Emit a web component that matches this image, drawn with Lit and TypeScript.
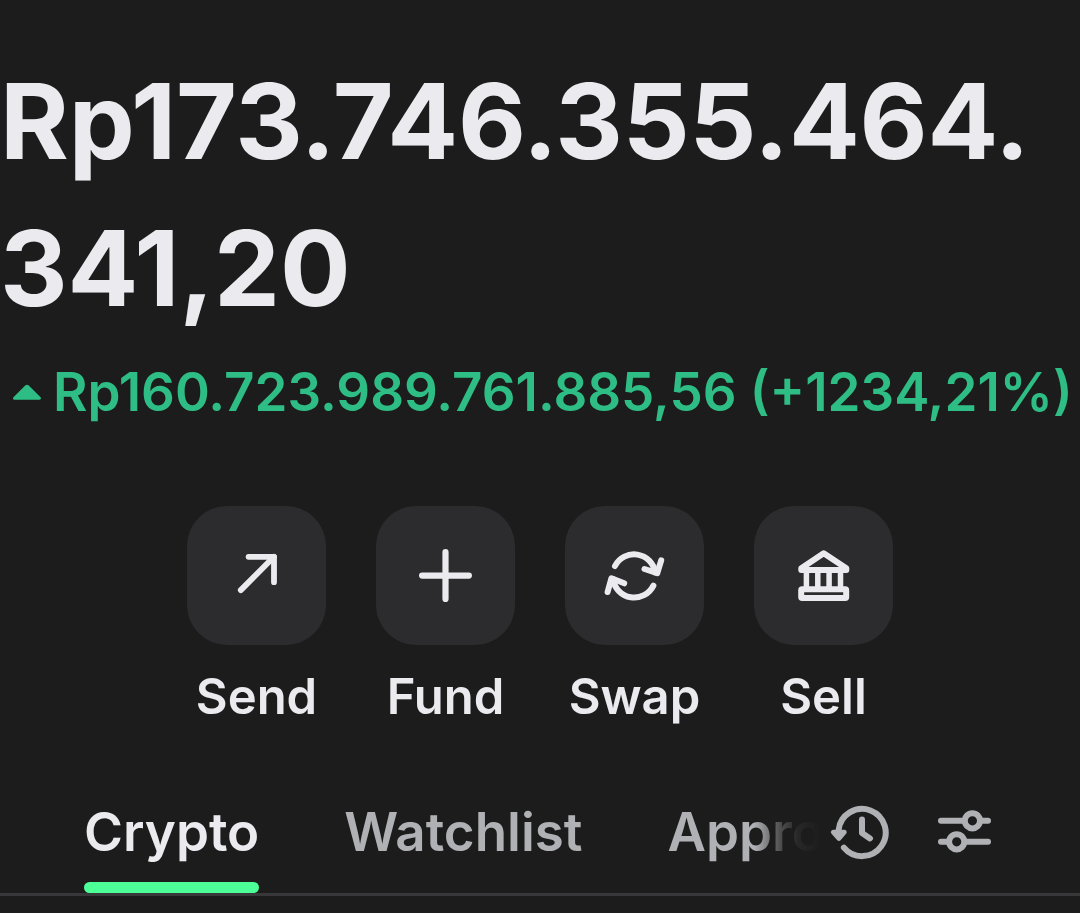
import { LitElement, html, css, svg } from "lit";
import type { TemplateResult } from "lit";
import { customElement, property, state } from "lit/decorators.js";
import { classMap } from "lit/directives/class-map.js";

interface WalletAction {
  id: string;
  label: string;
  icon: TemplateResult;
}

const ACTIONS: WalletAction[] = [
  {
    id: "send",
    label: "Send",
    icon: svg`
      <path stroke-width="5.8" d="M53.8 84.1 87 50.8" />
      <path stroke-width="5.8" d="M61.6 50.8H87V76.2" />
    `,
  },
  {
    id: "fund",
    label: "Fund",
    icon: svg`<path stroke-width="6.2" d="M69.5 46.2V93M46.1 69.6H92.9" />`,
  },
  {
    id: "swap",
    label: "Swap",
    icon: svg`
      <path d="M50 60A21.4 21.4 0 0 1 90.2 66.5" />
      <path d="M79.5 63 92.3 67.2 96.2 54.4" />
      <path d="M88.4 79.6A21.4 21.4 0 0 1 48 73" />
      <path d="M59.2 77.3 46.4 72.3 42.6 86" />
    `,
  },
  {
    id: "sell",
    label: "Sell",
    icon: svg`
      <path d="M69.7 47.2 47.3 62.2V63.9H92.3V62.2Z" />
      <path
        stroke-width="5.5"
        stroke-linecap="butt"
        d="M52.4 64V82M63.8 64V82M75.1 64V82M86.5 64V82"
      />
      <rect x="47.2" y="83.2" width="45" height="8.9" rx="1" />
    `,
  },
];

@customElement("action-button")
export class ActionButton extends LitElement {
  @property({ type: String })
  label = "";

  @property({ attribute: false })
  icon: TemplateResult | null = null;

  static styles = css`
    :host {
      display: block;
      width: 139px;
    }

    .button {
      display: flex;
      flex-direction: column;
      align-items: center;
      width: 100%;
      padding: 0;
      border: none;
      background: none;
      color: #ebebef;
      font: inherit;
      cursor: pointer;
    }

    .tile {
      width: 139px;
      height: 139px;
      border-radius: 40px;
      background: #2c2c2e;
    }

    .tile svg {
      display: block;
      fill: none;
      stroke: currentColor;
      stroke-width: 6;
      stroke-linecap: round;
      stroke-linejoin: round;
    }

    .label {
      margin-top: 22px;
      font-size: 49px;
      line-height: 60px;
      font-weight: 600;
      white-space: nowrap;
    }
  `;

  render() {
    return html`
      <button class="button">
        <span class="tile">
          <svg width="139" height="139" viewBox="0 0 139 139">${this.icon}</svg>
        </span>
        <span class="label">${this.label}</span>
      </button>
    `;
  }
}

@customElement("app-root")
export class AppRoot extends LitElement {
  @state()
  private activeTab = "Crypto";

  // the last tab runs under the fade at the edge of the strip
  private tabs = ["Crypto", "Watchlist", "Appro"];

  static styles = css`
    :host {
      display: flex;
      flex-direction: column;
      box-sizing: border-box;
      width: 100%;
      height: 913px;
      padding-top: 47px;
      overflow: hidden;
      background: #1c1c1c;
      color: #ebebef;
      font-family: Inter, "Liberation Sans", sans-serif;
    }

    .balance {
      font-size: 104.8px;
      line-height: 147px;
      font-weight: 700;
      letter-spacing: -0.15px;
      white-space: nowrap;
    }

    .change {
      display: flex;
      align-items: center;
      height: 66px;
      margin-top: 18px;
      padding-left: 12px;
      gap: 11px;
      color: #2ebd85;
      font-size: 52.9px;
      line-height: 66px;
      font-weight: 600;
      white-space: nowrap;
    }

    .caret {
      flex: none;
      fill: currentColor;
      stroke: currentColor;
      stroke-width: 3;
      stroke-linejoin: round;
    }

    .actions {
      display: flex;
      justify-content: center;
      gap: 50px;
      margin-top: 81px;
    }

    .tab-bar {
      display: flex;
      height: 111px;
      margin-top: 55px;
      padding-left: 84px;
      border-bottom: 3px solid #38383b;
    }

    .tabs {
      display: flex;
      gap: 85px;
      width: 742px;
      overflow: hidden;
      mask-image: linear-gradient(
        to right,
        #000 670px,
        rgba(0, 0, 0, 0.35) 696px,
        rgba(0, 0, 0, 0.08) 714px,
        transparent 738px
      );
    }

    .tab {
      display: flex;
      flex: none;
      flex-direction: column;
      justify-content: space-between;
      padding: 17px 0 0;
      border: none;
      background: none;
      color: #b0b1b4;
      font: inherit;
      font-size: 52.9px;
      line-height: 66px;
      font-weight: 600;
      cursor: pointer;
    }

    .tab.active {
      color: #ebebef;
    }

    .tab.active::after {
      content: "";
      height: 11px;
      border-radius: 5.5px;
      background: #4cff97;
    }

    .tools {
      display: flex;
      gap: 42px;
      padding-top: 18px;
      color: #b0b1b4;
    }

    .tools svg {
      fill: none;
      stroke: currentColor;
      stroke-width: 6;
      stroke-linecap: round;
      stroke-linejoin: round;
    }
  `;

  render() {
    return html`
      <div class="balance">Rp173.746.355.464.<br />341,20</div>

      <div class="change">
        <svg class="caret" width="30" height="18" viewBox="0 0 30 18">
          <path d="M2.5 15.2 14.5 3.4Q15 3 15.5 3.4L27.5 15.2Z" />
        </svg>
        <span class="change-text">Rp160.723.989.761.885,56 (+1234,21%)</span>
      </div>

      <div class="actions">
        ${ACTIONS.map(
          (action) => html`
            <action-button
              .label=${action.label}
              .icon=${action.icon}
            ></action-button>
          `,
        )}
      </div>

      <div class="tab-bar">
        <div class="tabs">
          ${this.tabs.map(
            (tab) => html`
              <button
                class=${classMap({ tab: true, active: tab === this.activeTab })}
                @click=${() => this._onSelectTab(tab)}
              >
                ${tab}
              </button>
            `,
          )}
        </div>
        <div class="tools">
          <svg width="64" height="64" viewBox="826 800 64 64">
            <path d="M843.9 847.6A23.6 23.6 0 1 0 838.6 830" />
            <path
              fill="currentColor"
              stroke-width="5"
              d="M833.4 832.2H844.2L838.9 838.4Z"
            />
            <path d="M862 819.6V833L870 838.4" />
          </svg>
          <svg width="64" height="64" viewBox="932 800 64 64">
            <path d="M941 820.8H963.9M981.3 820.8H988M941 841.8H948.1M965.5 841.8H988" />
            <circle cx="972.4" cy="820.8" r="7.6" />
            <circle cx="956.7" cy="841.8" r="7.6" />
          </svg>
        </div>
      </div>
    `;
  }

  private _onSelectTab(tab: string) {
    this.activeTab = tab;
  }
}

declare global {
  interface HTMLElementTagNameMap {
    "action-button": ActionButton;
    "app-root": AppRoot;
  }
}
